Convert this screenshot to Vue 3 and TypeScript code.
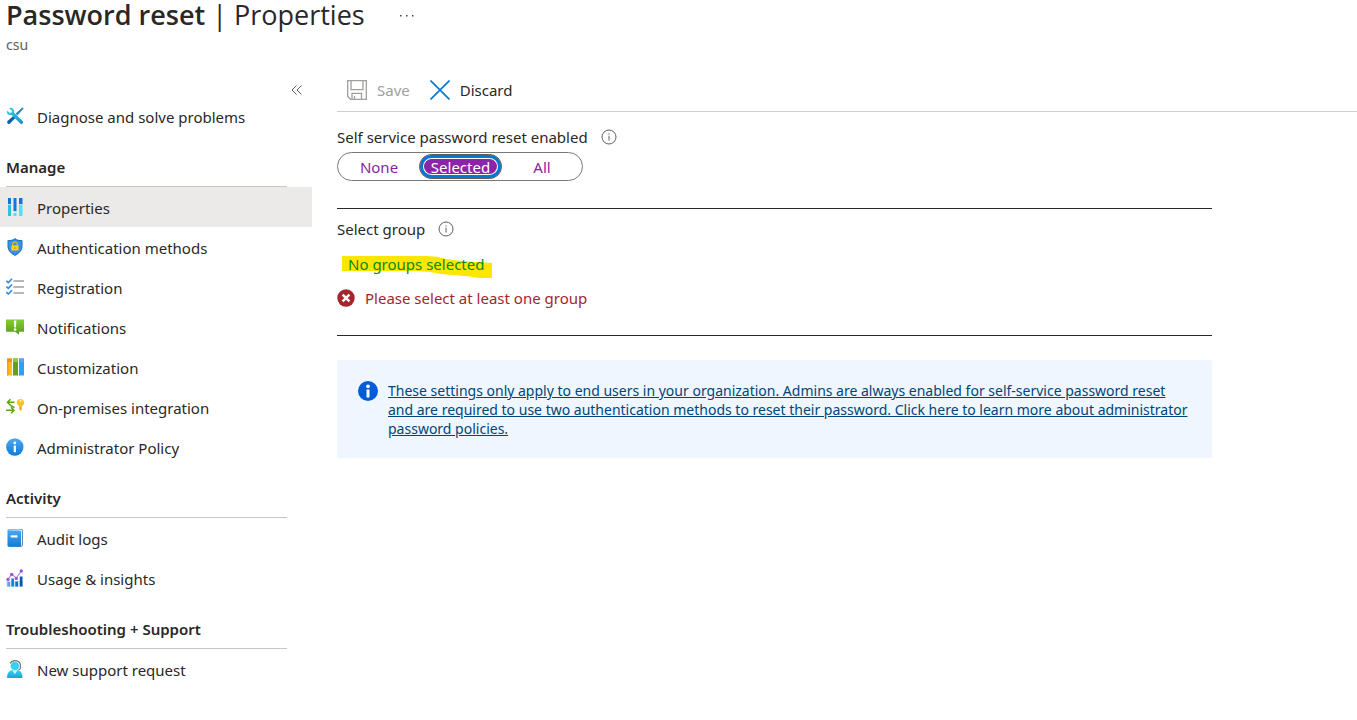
<script setup lang="ts">
import { ref } from 'vue'

interface NavItem {
  label: string
  icon: string
}
interface NavSection {
  title: string
  items: NavItem[]
}

const current = ref('Properties')
const scope = ref('Selected')
const scopes = ['None', 'Selected', 'All']

const sections: NavSection[] = [
  { title: '', items: [{ label: 'Diagnose and solve problems', icon: 'tools' }] },
  {
    title: 'Manage',
    items: [
      { label: 'Properties', icon: 'sliders' },
      { label: 'Authentication methods', icon: 'shield' },
      { label: 'Registration', icon: 'checklist' },
      { label: 'Notifications', icon: 'alert' },
      { label: 'Customization', icon: 'columns' },
      { label: 'On-premises integration', icon: 'sync' },
      { label: 'Administrator Policy', icon: 'info' },
    ],
  },
  {
    title: 'Activity',
    items: [
      { label: 'Audit logs', icon: 'book' },
      { label: 'Usage & insights', icon: 'chart' },
    ],
  },
  { title: 'Troubleshooting + Support', items: [{ label: 'New support request', icon: 'person' }] },
]
</script>

<template>
  <div class="page">
    <svg class="defs" aria-hidden="true">
      <defs>
        <linearGradient id="gBlue" x1="0" y1="0" x2="0" y2="1"><stop offset="0" stop-color="#50a8f0" /><stop offset="1" stop-color="#0f7bd8" /></linearGradient>
        <linearGradient id="gCyan" x1="0" y1="0" x2="0" y2="1"><stop offset="0" stop-color="#32d4f5" /><stop offset="1" stop-color="#1aa5cc" /></linearGradient>
        <linearGradient id="gGreen" x1="0" y1="0" x2="0" y2="1"><stop offset="0" stop-color="#7fd02f" /><stop offset="1" stop-color="#5c9a22" /></linearGradient>
        <linearGradient id="gWrench" x1="0" y1="0" x2="1" y2="1"><stop offset="0" stop-color="#32d4f5" /><stop offset="1" stop-color="#1490c0" /></linearGradient>
      </defs>
    </svg>

    <header class="head">
      <div class="title-row">
        <h1><strong>Password reset</strong> | Properties</h1>
        <button class="more" type="button" aria-label="More actions">
          <svg width="16" height="4" viewBox="0 0 16 4" fill="#444"><rect x="1" y="2" width="1.500" height="1.500" /><rect x="7" y="2" width="1.500" height="1.500" /><rect x="13" y="2" width="1.500" height="1.500" /></svg>
        </button>
      </div>
      <p class="tenant">csu</p>
    </header>

    <div class="body">
      <nav class="side" aria-label="Password reset">
        <div class="collapse-row">
          <button class="collapse" type="button" aria-label="Collapse menu">
            <svg width="12" height="12" viewBox="0 0 12 12" fill="none" stroke="#605e5c" stroke-width="1"><path d="M5.500 1.500 1 6l4.500 4.500M10.500 1.500 6 6l4.500 4.500" /></svg>
          </button>
        </div>
        <section v-for="s in sections" :key="s.title">
          <h2 v-if="s.title">{{ s.title }}</h2>
          <ul>
            <li v-for="i in s.items" :key="i.label">
              <a href="#" :class="{ active: current === i.label }" @click.prevent="current = i.label">
                <svg class="icon" viewBox="0 0 18 18" aria-hidden="true">
                  <g v-if="i.icon === 'tools'">
                    <path d="M16.600 .8 17.200 1.400 11.500 8 10 6.600z" fill="#2b88b8" stroke="#2b88b8" stroke-width=".8" />
                    <path d="M9 7.500 11 9.300 4.300 16.300Q2.900 17.600 1.600 16.400 .4 15.200 1.800 13.800z" fill="#0b62a8" />
                    <path d="M3 1.200Q5.500 .2 7.200 1.900 8.500 3.300 7.900 5.600L16.800 14.200Q17.600 15.400 16.600 16.400 15.500 17.400 14.300 16.600L5.600 7.900Q3.300 8.500 1.900 7.200 .4 5.700 1 3.400L3.500 5.800 5.700 5.400 5.800 3.600z" fill="url(#gWrench)" />
                  </g>
                  <g v-else-if="i.icon === 'sliders'">
                    <path d="M2 0h3v6H2zM7.500 0h3v13h-3zM13 0h3.500v6H13z" fill="#0f78d4" />
                    <path d="M2 7h3v11H2z" fill="#32bedd" /><path d="M7.500 15h3v3h-3zM13 7h3.500v11H13z" fill="#50e0ff" />
                    <path d="M2 6h3v1H2zM7.500 13h3v1h-3zM13 6h3.500v1H13z" fill="#b5dff5" />
                  </g>
                  <g v-else-if="i.icon === 'shield'">
                    <path d="M9 0C11 2 13 2 16.500 2.300V8.500C16.500 13 12.500 15.800 9 18 5.500 15.800 1.500 13 1.500 8.500V2.300C5 2 7 2 9 0z" fill="#1673c8" />
                    <path d="M9 1.300C11 3 13 3 15.500 3.200V8.500C15.500 12.500 12 15 9 16.800 6 15 2.500 12.500 2.500 8.500V3.200C5 3 7 3 9 1.300z" fill="#3c91e6" />
                    <path d="M6.700 8V6.300a2.300 2.300 0 0 1 4.600 0V8" fill="none" stroke="#f5bd18" stroke-width="1.200" />
                    <rect x="5.400" y="7.400" width="7.200" height="5.200" rx=".6" fill="#ffcb1f" /><path d="M9 9v2" stroke="#b98500" stroke-width=".8" />
                  </g>
                  <g v-else-if="i.icon === 'checklist'" fill="none">
                    <path d="M7.500 3H18M7.500 9H18M7.500 15H18" stroke="#a0a0a0" stroke-width="1.700" />
                    <path d="M.4 2.800 2.300 4.600 6 .8M.4 8.500 2.300 10.300 6 6.500M.4 14.200 2.300 16 6 12.200" stroke="#2b88e0" stroke-width="1.600" />
                  </g>
                  <g v-else-if="i.icon === 'alert'">
                    <path d="M0 1.500h18v12.300h-5v3l-4-3H0z" fill="url(#gGreen)" />
                    <path d="M7.900 2.500h2.500L10 9.400H8.300z" fill="#fff" /><circle cx="9.100" cy="11.600" r="1.300" fill="#fff" />
                  </g>
                  <g v-else-if="i.icon === 'columns'">
                    <path d="M1 .5h5v17H1z" fill="#fdbb18" /><path d="M1 .5h5v3.600H1z" fill="#f78d1e" /><path d="M1 4h1.500v13.500H1z" fill="#ff9f0e" />
                    <path d="M7 .5h5v17H7z" fill="#5ea223" /><path d="M7 .5h5v3.600H7z" fill="#83cf31" />
                    <path d="M13 .5h5v17h-5z" fill="#2aa4f2" /><path d="M13 .5h5v3.600h-5z" fill="#5ea0ef" />
                  </g>
                  <g v-else-if="i.icon === 'sync'">
                    <path d="M8.500 4.300H1.500M4.500 1.300 1.500 4.300 4.500 7.300 8.500 9.600M0 12.300H8M5 9.300 8 12.300 5 15.300" fill="none" stroke="#5ea614" stroke-width="1.500" />
                    <path d="M14.500 1a3.600 3.600 0 0 1 1.500 6.900v3.500L14.500 13 13 11.500V7.900A3.600 3.600 0 0 1 14.500 1z" fill="#fcc51d" /><circle cx="14.500" cy="3" r="1" fill="#fff4b5" /><path d="M14.500 8.500v3" stroke="#df9f10" stroke-width=".7" />
                  </g>
                  <g v-else-if="i.icon === 'info'">
                    <circle cx="8.800" cy="9" r="8.700" fill="url(#gBlue)" /><circle cx="8.800" cy="4.900" r="1.400" fill="#fff" /><path d="M7.700 7.500h2.300v6.700H7.700z" fill="#fff" />
                  </g>
                  <g v-else-if="i.icon === 'book'">
                    <path d="M3 .3h12q1.500 0 1.500 1v15q0 1-1.500 1H3z" fill="#deeffa" stroke="#2f76a8" stroke-width=".8" />
                    <path d="M1.500 1.200Q1.500 .3 2.800 .3H14v1.200H3L15 2v15.700H2.800Q1.500 17.700 1.500 16.500z" fill="url(#gBlue)" /><path d="M2.500 1h12" stroke="#bfdcec" /><path d="M4.700 6.300h6.800v2.200H4.700z" fill="#fff" />
                  </g>
                  <g v-else-if="i.icon === 'chart'">
                    <path d="M.5 18V12h16.500v6z" fill="#cce6f8" />
                    <path d="M1.300 13h2.700v4.500H1.300z" fill="#5ea0ef" /><path d="M5.300 9.500h2.700v8H5.300z" fill="#1683db" /><path d="M9.300 12.500H12v5H9.300z" fill="#0d74c7" /><path d="M13.800 7.500h2.700v10h-2.700z" fill="#075a9b" />
                    <path d="M2 10.500 5.700 5.400 10.300 9 15.300 2" fill="none" stroke="#b28bf0" stroke-width="1.200" />
                    <g fill="#9b52e5"><circle cx="2" cy="10.500" r="1.700" /><circle cx="5.700" cy="5.400" r="1.700" /><circle cx="10.300" cy="9.400" r="1.700" /><circle cx="15.300" cy="2" r="1.700" /></g>
                  </g>
                  <g v-else>
                    <path d="M4 3.600C6-.6 13-.6 14.400 4.500V8q0 1.500-2 1.800" fill="none" stroke="#767676" stroke-width="1.200" />
                    <path d="M1 17.400C1.200 13 3 10.800 6.500 10h5c3.500.8 4.800 3.200 5 7.400q0 .6-1 .6H2q-1 0-1-.6z" fill="url(#gCyan)" />
                    <path d="M6.200 10 8.900 14.300 11.600 10z" fill="#d5f5fb" /><circle cx="8.900" cy="6" r="4.300" fill="#35d2f2" />
                  </g>
                </svg>
                <span>{{ i.label }}</span>
              </a>
            </li>
          </ul>
        </section>
      </nav>

      <main>
        <div class="toolbar">
          <button type="button" disabled>
            <svg width="20" height="20" viewBox="0 0 20 20" fill="none" stroke="#a19f9d" stroke-width="1.300"><path d="M.7 .7h18.600v18.600H3.500L.7 16.500zM4 .7v9h12v-9M5 19.300v-6h9.500v6M7.500 16v3.300" /></svg>
            <span>Save</span>
          </button>
          <button type="button">
            <svg width="20" height="20" viewBox="0 0 20 20" fill="none" stroke="#0078d4" stroke-width="1.600"><path d="M.5 .5l19 19M19.500 .5l-19 19" /></svg>
            <span>Discard</span>
          </button>
        </div>

        <form class="content" @submit.prevent>
          <fieldset class="block">
            <legend>
              Self service password reset enabled
              <svg class="hint" viewBox="0 0 16 16" fill="none" stroke="#605e5c"><circle cx="8" cy="8" r="7" /><path d="M8 6.700v4.800M8 4.300v1.200" /></svg>
            </legend>
            <div class="pills">
              <label v-for="o in scopes" :key="o" :class="{ on: scope === o }">
                <input v-model="scope" type="radio" name="scope" :value="o" />{{ o }}
              </label>
            </div>
          </fieldset>

          <section class="block group">
            <p class="label">
              Select group
              <svg class="hint" viewBox="0 0 16 16" fill="none" stroke="#605e5c"><circle cx="8" cy="8" r="7" /><path d="M8 6.700v4.800M8 4.300v1.200" /></svg>
            </p>
            <a class="pick" href="#" @click.prevent>
              <svg class="marker" viewBox="0 0 150 22" preserveAspectRatio="none" aria-hidden="true"><path d="M0 0H85Q95 0 104 3 115 5 150 7V22H140Q134 22 128 20.500 113 19 99 18 86 15 73 15H0z" fill="#ffe600" /></svg>
              <span>No groups selected</span>
            </a>
            <p class="error" role="alert">
              <svg width="18" height="18" viewBox="0 0 18 18"><circle cx="9" cy="9" r="8.700" fill="#a4262c" /><path d="M5.600 5.600l6.800 6.800M12.400 5.600l-6.800 6.800" stroke="#fff" stroke-width="2.400" /></svg>
              Please select at least one group
            </p>
          </section>

          <aside class="notice">
            <svg width="20" height="20" viewBox="0 0 20 20"><circle cx="10" cy="10" r="10" fill="#015cda" /><circle cx="10" cy="5.300" r="1.900" fill="#fff" /><path d="M8.500 8.500h3V16.500h-3z" fill="#fff" /></svg>
            <a href="#" @click.prevent>These settings only apply to end users in your organization. Admins are always enabled for self-service password reset and are required to use two authentication methods to reset their password. Click here to learn more about administrator password policies.</a>
          </aside>
        </form>
      </main>
    </div>
  </div>
</template>

<style>
body {
  margin: 0;
  background: #fff;
}
</style>

<style scoped>
.page {
  font-family: "Noto Sans", "Open Sans", sans-serif;
  font-size: 15px;
  line-height: 20px;
  color: #292827;
}
.page * {
  box-sizing: border-box;
}
.defs {
  position: absolute;
  width: 0;
  height: 0;
}
h1, h2, p, ul, fieldset, legend {
  margin: 0;
  padding: 0;
  border: 0;
}
ul {
  list-style: none;
}
button {
  font: inherit;
  color: inherit;
  background: none;
  border: 0;
  padding: 0;
}
svg {
  display: block;
  flex: none;
}
.head {
  padding: 0 6px;
  height: 80px;
}
.title-row {
  display: flex;
  align-items: center;
  gap: 34px;
  height: 30px;
}
h1 {
  font-family: "Open Sans", "Noto Sans", sans-serif;
  font-size: 27px;
  line-height: 30px;
  font-weight: 400;
}
h1 strong {
  font-weight: 600;
}
.tenant {
  font-size: 14px;
  line-height: 20px;
  padding-top: 5px;
  color: #605e5c;
}
.body {
  display: flex;
  align-items: flex-start;
}
.side {
  width: 312px;
  flex: none;
}
.collapse-row {
  display: flex;
  justify-content: flex-end;
  height: 16px;
  padding: 4px 9px 0 0;
}
.collapse {
  height: 12px;
}
.side h2 {
  height: 51px;
  margin: 0 25px 0 6px;
  padding-top: 21px;
  border-bottom: 1px solid #c8c6c4;
  font-size: 15px;
  line-height: 20px;
  font-weight: 600;
}
.side a {
  display: flex;
  align-items: center;
  gap: 13px;
  height: 40px;
  padding: 0 6px;
  color: inherit;
  text-decoration: none;
}
.side a span {
  padding-top: 2px;
}
.side a.active {
  background: #ebeae9;
}
.icon {
  width: 18px;
  height: 18px;
}
main {
  flex: 1;
  min-width: 0;
  padding-left: 25px;
}
.toolbar {
  display: flex;
  gap: 20px;
  height: 32px;
  padding: 0 10px 12px;
  border-bottom: 1px solid #d2d0ce;
}
.toolbar button {
  display: flex;
  align-items: center;
  gap: 10px;
  height: 20px;
}
.toolbar button:disabled {
  color: #a19f9d;
}
.content {
  max-width: 875px;
  padding-top: 15px;
}
.block {
  height: 82px;
  border-bottom: 1px solid #292827;
}
legend, .label {
  display: flex;
  align-items: center;
  gap: 13px;
  height: 20px;
}
.hint {
  width: 16px;
  height: 16px;
}
.pills {
  display: inline-flex;
  align-items: center;
  height: 29px;
  margin-top: 5px;
  padding-left: 1px;
  border: 1px solid #7a7876;
  border-radius: 15px;
  color: #881fa3;
}
.pills label {
  display: flex;
  align-items: center;
  justify-content: center;
  width: 80px;
  height: 25px;
  border-radius: 13px;
}
.pills label.on {
  width: 83px;
  color: #fff;
  background: #8a24a8;
  border: 1px solid #605e5c;
  box-shadow: inset 0 0 0 3px #0078d4, inset 0 0 0 4px #fff;
}
.pills input {
  position: absolute;
  opacity: 0;
  pointer-events: none;
}
.group {
  height: 127px;
  padding-top: 10px;
}
.pick {
  position: relative;
  display: inline-block;
  margin-top: 15px;
  padding: 0 8px 0 11px;
  color: #078a14;
  text-decoration: none;
}
.pick span {
  position: relative;
}
.marker {
  position: absolute;
  left: 5px;
  top: 2px;
  width: calc(100% - 5px);
  height: 22px;
}
.error {
  display: flex;
  align-items: center;
  gap: 10px;
  margin-top: 14px;
  color: #a4262c;
}
.notice {
  display: flex;
  gap: 10px;
  margin-top: 24px;
  padding: 21px 20px 20px 21px;
  border-radius: 2px;
  background: #eff6ff;
}
.notice a {
  font-size: 14px;
  line-height: 19px;
  color: #004578;
}
</style>
